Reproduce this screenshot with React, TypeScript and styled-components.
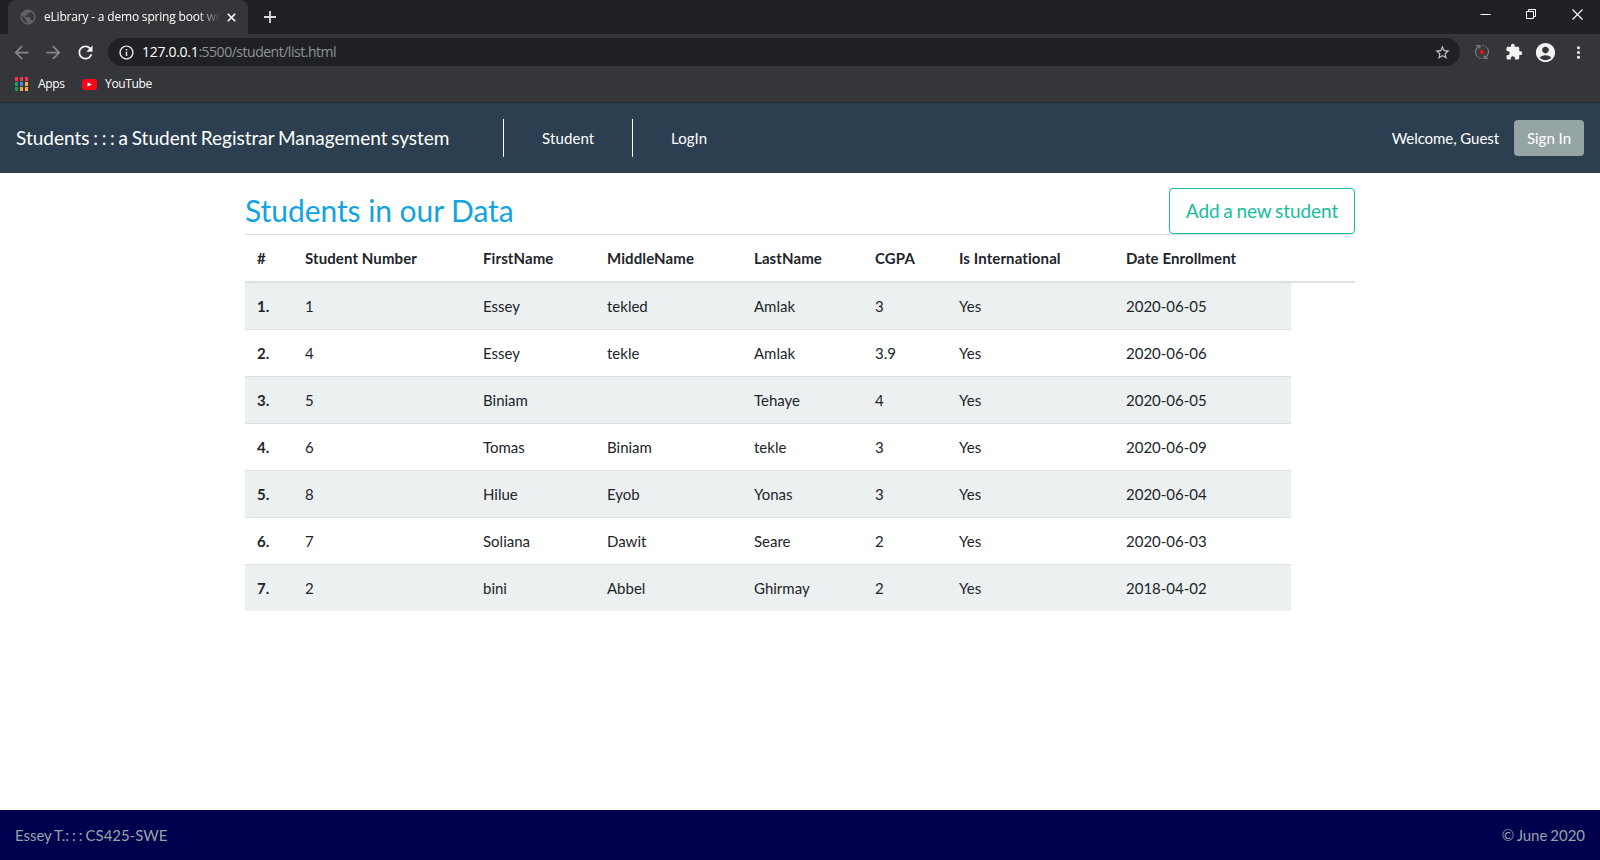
import React from "react";
import styled, { createGlobalStyle } from "styled-components";
import {
  MdAccountCircle,
  MdArrowBack,
  MdArrowForward,
  MdExtension,
  MdInfoOutline,
  MdMoreVert,
  MdPublic,
  MdRefresh,
  MdStarBorder,
} from "react-icons/md";

const GlobalStyle = createGlobalStyle`
  * { box-sizing: border-box; }
  body { margin: 0; background: #fff; }
  svg { display: block; flex: none; }
`;

const Screen = styled.div`
  display: flex;
  flex-direction: column;
  height: 860px;
  width: 1600px;
  overflow: hidden;
  font-family: Lato, "Liberation Sans", sans-serif;
  font-size: 15px;
  line-height: 22px;
  color: #212529;
`;

/* Browser frame */
const Chrome = styled.header`
  height: 103px;
  flex: none;
  background: #35363a;
  border-bottom: 1px solid #28292b;
  color: #fff;
  font-family: "Open Sans", "Noto Sans", sans-serif;
  font-size: 12px;
`;

const TabStrip = styled.div`
  display: flex;
  height: 34px;
  padding-left: 8px;
  background: #202124;
`;

const Tab = styled.div`
  display: flex;
  align-items: center;
  width: 240px;
  padding: 0 11px 0 11px;
  border-radius: 8px 8px 0 0;
  background: #35363a;
  color: #5f6368;
`;

const TabTitle = styled.span`
  width: 178px;
  margin-left: 7px;
  margin-right: 5px;
  white-space: nowrap;
  letter-spacing: -0.19px;
  color: #fff;
  mask-image: linear-gradient(to right, #000 154px, transparent 176px);
`;

const NewTab = styled.div`
  display: flex;
  align-items: center;
  margin-left: 16px;
`;

const WindowControls = styled.div`
  display: flex;
  gap: 35px;
  margin-left: auto;
  padding: 9px 17px 0 0;
`;

const Toolbar = styled.div`
  display: flex;
  align-items: center;
  height: 36px;
  padding: 0 12px 0 11px;
`;

const NavIcons = styled.div`
  display: flex;
  gap: 11px;
  width: 97px;
  color: #85868a;
  svg:last-child { color: #f1f3f4; }
`;

const AddressBar = styled.div`
  display: flex;
  align-items: center;
  width: 1352px;
  height: 28px;
  padding: 0 9px 0 9.5px;
  border-radius: 14px;
  background: #202124;
  color: #e8eaed;
  svg:last-child { margin-left: auto; color: #c4c6c9; }
`;

const Url = styled.span`
  margin-left: 7.5px;
  font-size: 14px;
  letter-spacing: -0.48px;
  color: #8f9296;
  white-space: nowrap;
  b { font-weight: 400; letter-spacing: -0.3px; color: #fff; }
`;

const Extensions = styled.div`
  display: flex;
  align-items: center;
  margin-left: 14px;
  color: #f1f3f4;
  svg:nth-child(2) { margin-left: 15px; }
  svg:nth-child(3) { margin-left: 11px; }
  svg:nth-child(4) { margin-left: 12px; }
`;

const Bookmarks = styled.div`
  display: flex;
  align-items: center;
  height: 28px;
  padding-left: 15px;
`;

const BookmarkLabel = styled.span<{ $before: number; $after?: number }>`
  margin: 0 ${(p) => p.$after ?? 0}px 0 ${(p) => p.$before}px;
  letter-spacing: -0.35px;
`;

/* Site navigation */
const Navbar = styled.nav`
  display: flex;
  align-items: center;
  height: 70px;
  flex: none;
  padding: 0 16px;
  background: #2b3f50;
  color: #fff;
  white-space: nowrap;
`;

const Brand = styled.div`
  width: 487px;
  font-size: 19px;
  word-spacing: -1.15px;
`;

const NavLink = styled.div`
  display: flex;
  align-items: center;
  height: 38px;
  width: 129px;
  padding-left: 38px;
  border-left: 1px solid #fff;
  letter-spacing: 0.12px;
`;

const Welcome = styled.div`
  margin-left: auto;
  letter-spacing: -0.06px;
`;

const SignIn = styled.button`
  width: 70px;
  height: 36px;
  margin-left: 15px;
  padding: 0;
  border: 0;
  border-radius: 4px;
  background: #95a5a6;
  color: #fff;
  font: inherit;
`;

/* Student list */
const Main = styled.main`
  flex: 1;
  width: 1110px;
  margin: 0 auto;
  padding-top: 15px;
`;

const TitleRow = styled.div`
  display: flex;
  align-items: center;
  justify-content: space-between;
  height: 46px;
`;

const Title = styled.h2`
  margin: 0 0 2px;
  font-size: 30px;
  font-weight: 400;
  line-height: 38px;
  letter-spacing: -0.06px;
  color: #13a3e2;
`;

const AddButton = styled.button`
  width: 186px;
  height: 46px;
  padding: 0;
  border: 1px solid #18bc9c;
  border-radius: 4px;
  background: #fff;
  color: #18bc9c;
  font: inherit;
  font-size: 19px;
  letter-spacing: -0.06px;
  word-spacing: -1.1px;
`;

const Table = styled.table`
  width: 1110px;
  table-layout: fixed;
  border-spacing: 0;
`;

const HeadCell = styled.th`
  height: 49px;
  padding: 0 0 0 12px;
  border-top: 1px solid #dee2e6;
  border-bottom: 2px solid #dee2e6;
  text-align: left;
  font-weight: 700;
  letter-spacing: 0.1px;
  white-space: nowrap;
`;

const BodyRow = styled.tr`
  td {
    height: 47px;
    padding: 0 0 0 12px;
    border-top: 1px solid #dee2e6;
  }
  td:first-child { font-weight: 700; }
  &:first-child td { height: 46px; border-top: 0; }
  &:nth-child(odd) td { background: #ecf0f1; }
`;

const Footer = styled.footer`
  display: flex;
  align-items: center;
  justify-content: space-between;
  height: 50px;
  flex: none;
  padding: 0 15px;
  background: #00004f;
  color: #95a5a6;
  letter-spacing: -0.04px;
  word-spacing: -0.75px;
`;

const columns = [
  { label: "#", width: 48 },
  { label: "Student Number", width: 178 },
  { label: "FirstName", width: 124 },
  { label: "MiddleName", width: 147 },
  { label: "LastName", width: 121 },
  { label: "CGPA", width: 84 },
  { label: "Is International", width: 167 },
  { label: "Date Enrollment", width: 177 },
  { label: "", width: 64 },
];

const students = [
  ["1", "Essey", "tekled", "Amlak", "3", "Yes", "2020-06-05"],
  ["4", "Essey", "tekle", "Amlak", "3.9", "Yes", "2020-06-06"],
  ["5", "Biniam", "", "Tehaye", "4", "Yes", "2020-06-05"],
  ["6", "Tomas", "Biniam", "tekle", "3", "Yes", "2020-06-09"],
  ["8", "Hilue", "Eyob", "Yonas", "3", "Yes", "2020-06-04"],
  ["7", "Soliana", "Dawit", "Seare", "2", "Yes", "2020-06-03"],
  ["2", "bini", "Abbel", "Ghirmay", "2", "Yes", "2018-04-02"],
];

const appColors = ["#f03a47", "#f03a47", "#f03a47", "#12a15e", "#2f8df5", "#f9ab32", "#12a15e", "#f9ab32", "#f9ab32"];

const AppsIcon = () => (
  <svg width="13" height="14" viewBox="0 0 13 14">
    {appColors.map((c, i) => (
      <rect key={i} x={(i % 3) * 5} y={Math.floor(i / 3) * 5} width="3" height="4" fill={c} />
    ))}
  </svg>
);

const YouTubeIcon = () => (
  <svg width="15" height="11" viewBox="0 0 15 11">
    <rect width="15" height="11" rx="2.5" fill="#ff0018" />
    <path d="M5.5 3.2 9.7 5.5 5.5 7.8Z" fill="#fff" />
  </svg>
);

const CaptureIcon = () => (
  <svg width="16" height="16" viewBox="0 0 16 16" fill="none" stroke="#77787b" strokeWidth="1.3">
    <path d="M2.6 12A6.4 6.4 0 0 1 5.5 2.4M2 1.7h4v3.6M13.4 4A6.4 6.4 0 0 1 10.5 13.6M14 14.3h-4v-3.6" />
    <path d="M8 1.6a6.4 6.4 0 0 1 5 2.4M8 14.4A6.4 6.4 0 0 1 3 12" stroke="#5c5d61" />
    <circle cx="8" cy="8" r="3.6" stroke="#404145" />
    <circle cx="8" cy="8" r="2.1" fill="#ff0a1c" stroke="none" />
  </svg>
);

export default function App() {
  return (
    <Screen>
      <GlobalStyle />
      <Chrome>
        <TabStrip>
          <Tab>
            <MdPublic size={18} />
            <TabTitle>eLibrary - a demo spring boot we</TabTitle>
            <svg width="9" height="9" viewBox="0 0 9 9" stroke="#fff" strokeWidth="1.6">
              <path d="M.8.8 8.2 8.2M8.2.8.8 8.2" />
            </svg>
          </Tab>
          <NewTab>
            <svg width="12" height="12" viewBox="0 0 12 12" stroke="#dcdde0" strokeWidth="1.8">
              <path d="M6 0v12M0 6h12" />
            </svg>
          </NewTab>
          <WindowControls>
            <svg width="11" height="11" viewBox="0 0 11 11" stroke="#fff">
              <path d="M.5 5.5h10" />
            </svg>
            <svg width="11" height="11" viewBox="0 0 11 11" fill="none" stroke="#fff">
              <path d="M.5 2.5h7v7h-7zM2.5 2.5v-2h7v7h-2" />
            </svg>
            <svg width="11" height="11" viewBox="0 0 11 11" stroke="#fff" strokeWidth="1.1">
              <path d="M.5.5l10 10M10.5.5l-10 10" />
            </svg>
          </WindowControls>
        </TabStrip>
        <Toolbar>
          <NavIcons>
            <MdArrowBack size={21} />
            <MdArrowForward size={21} />
            <MdRefresh size={21} />
          </NavIcons>
          <AddressBar>
            <MdInfoOutline size={17} />
            <Url>
              <b>127.0.0.1</b>:5500/student/list.html
            </Url>
            <MdStarBorder size={17} />
          </AddressBar>
          <Extensions>
            <CaptureIcon />
            <MdExtension size={18} />
            <MdAccountCircle size={23} />
            <MdMoreVert size={19} />
          </Extensions>
        </Toolbar>
        <Bookmarks>
          <AppsIcon />
          <BookmarkLabel $before={10} $after={17}>Apps</BookmarkLabel>
          <YouTubeIcon />
          <BookmarkLabel $before={8.5}>YouTube</BookmarkLabel>
        </Bookmarks>
      </Chrome>
      <Navbar>
        <Brand>Students : : : a Student Registrar Management system</Brand>
        <NavLink>Student</NavLink>
        <NavLink>LogIn</NavLink>
        <Welcome>Welcome, Guest</Welcome>
        <SignIn>Sign In</SignIn>
      </Navbar>
      <Main>
        <TitleRow>
          <Title>Students in our Data</Title>
          <AddButton>Add a new student</AddButton>
        </TitleRow>
        <Table>
          <colgroup>
            {columns.map((c, i) => (
              <col key={i} width={c.width} />
            ))}
          </colgroup>
          <thead>
            <tr>
              {columns.map((c, i) => (
                <HeadCell key={i}>{c.label}</HeadCell>
              ))}
            </tr>
          </thead>
          <tbody>
            {students.map((cells, row) => (
              <BodyRow key={row}>
                <td>{row + 1}.</td>
                {cells.map((cell, i) => (
                  <td key={i}>{cell}</td>
                ))}
              </BodyRow>
            ))}
          </tbody>
        </Table>
      </Main>
      <Footer>
        <span>Essey T.: : : CS425-SWE</span>
        <span>© June 2020</span>
      </Footer>
    </Screen>
  );
}
